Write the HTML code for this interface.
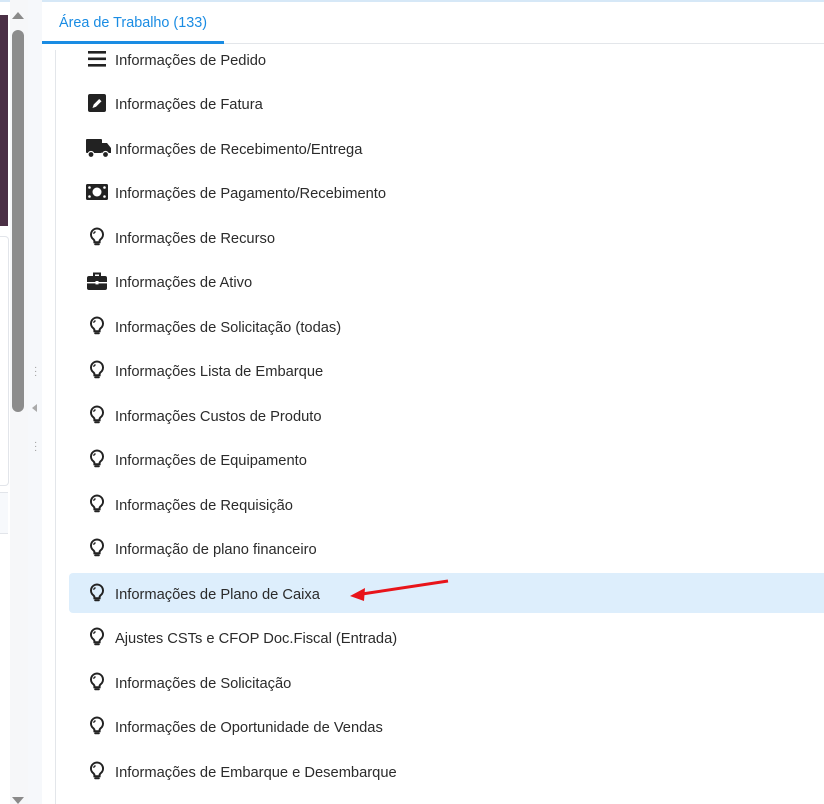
<!DOCTYPE html><html><head><meta charset="utf-8"><style>
body{margin:0;width:824px;height:804px;overflow:hidden;background:#fff;font-family:"Liberation Sans",sans-serif;position:relative}
.a{position:absolute}
.row{position:absolute;left:86px;height:22px;font-size:14.7px;color:#2b2b2b;line-height:22px}
.row svg{position:absolute;left:0;top:0}
.row span{position:absolute;left:29px;top:2px;white-space:nowrap}
</style></head><body>
<div class="a" style="left:0;top:0;width:824px;height:2px;background:#d6e8f7"></div>
<div class="a" style="left:0;top:15px;width:8px;height:211px;background:#4b3045"></div>
<div class="a" style="left:0;top:236px;width:8px;height:248px;border:1px solid #e2e5ea;border-left:none;border-radius:0 4px 4px 0"></div>
<div class="a" style="left:0;top:492px;width:8px;height:40px;border-top:1px solid #e2e5ea;border-bottom:1px solid #e2e5ea;background:#f7f9fc"></div>
<div class="a" style="left:10px;top:0;width:18px;height:804px;background:#f6f7f9"></div>
<div class="a" style="left:12px;top:12px;width:0;height:0;border-left:6px solid transparent;border-right:6px solid transparent;border-bottom:7px solid #8a8a8a"></div>
<div class="a" style="left:12px;top:30px;width:12px;height:382px;background:#8c8c8c;border-radius:6px"></div>
<div class="a" style="left:12px;top:797px;width:0;height:0;border-left:6px solid transparent;border-right:6px solid transparent;border-top:7px solid #8a8a8a"></div>
<div class="a" style="left:28px;top:0;width:14px;height:804px;background:#f6f8fb"></div>
<div class="a" style="left:34px;top:366px;color:#999;font-size:10px;line-height:4px">·<br>·<br>·</div>
<div class="a" style="left:32px;top:404px;width:0;height:0;border-top:4px solid transparent;border-bottom:4px solid transparent;border-right:5px solid #aaa"></div>
<div class="a" style="left:34px;top:441px;color:#999;font-size:10px;line-height:4px">·<br>·<br>·</div>
<div class="a" style="left:42px;top:43px;width:782px;height:1px;background:#e3e6ea"></div>
<div class="a" style="left:42px;top:41px;width:182px;height:3px;background:#1a8ce3"></div>
<div class="a" style="left:59px;top:15px;font-size:14.4px;color:#1a8ce3">Área de Trabalho (133)</div>
<div class="a" style="left:55px;top:50px;width:1px;height:754px;background:#e3e6ea"></div>
<div class="a" style="left:69px;top:573px;width:760px;height:40px;background:#ddeefc;border-radius:4px"></div>
<svg class="a" style="left:0;top:0" width="824" height="804"><defs><symbol id="b" viewBox="0 0 22 22"><path d="M11 2.5a6 6 0 0 0-3.6 10.8c.7.6 1 1.2 1 2v.9h5.2v-.9c0-.8.3-1.4 1-2A6 6 0 0 0 11 2.5z" fill="none" stroke="#222" stroke-width="2"/><path d="M9.6 5.8a2.3 2.3 0 0 0-1.9 2" fill="none" stroke="#222" stroke-width="1.3"/><rect x="8.2" y="17.2" width="5.6" height="2" rx="1" fill="#222"/></symbol></defs>
<path d="M448 581 L362 594" stroke="#e8141a" stroke-width="3" fill="none"/><path d="M350 596 L365 588 L364 601z" fill="#e8141a"/></svg>
<div class="row" style="top:48px"><svg width="22" height="22"><rect x="2" y="3" width="18" height="2.6" fill="#222"/><rect x="2" y="9.5" width="18" height="2.6" fill="#222"/><rect x="2" y="16" width="18" height="2.6" fill="#222"/></svg><span>Informações de Pedido</span></div>
<div class="row" style="top:92px"><svg width="22" height="22"><rect x="2" y="2" width="18" height="18" rx="2" fill="#222"/><path d="M6.5 16l1.2-3.5 5.5-5.5 2.3 2.3-5.5 5.5z" fill="#fff"/></svg><span>Informações de Fatura</span></div>
<div class="row" style="top:137px"><svg width="26" height="22"><rect x="0" y="2" width="16" height="14" rx="1" fill="#222"/><path d="M16 6h5l4 5v5h-9z" fill="#222"/><circle cx="5" cy="17.5" r="3" fill="#222" stroke="#fff" stroke-width="1.2"/><circle cx="19.5" cy="17.5" r="3" fill="#222" stroke="#fff" stroke-width="1.2"/></svg><span>Informações de Recebimento/Entrega</span></div>
<div class="row" style="top:181px"><svg width="24" height="22"><rect x="0" y="3" width="22" height="16" rx="1.5" fill="#222"/><circle cx="11" cy="11" r="4.5" fill="#fff"/><circle cx="3.5" cy="6.5" r="1.3" fill="#fff"/><circle cx="18.5" cy="15.5" r="1.3" fill="#fff"/><circle cx="3.5" cy="15.5" r="1.3" fill="#fff"/><circle cx="18.5" cy="6.5" r="1.3" fill="#fff"/></svg><span>Informações de Pagamento/Recebimento</span></div>
<div class="row" style="top:226px"><svg width="22" height="22"><use href="#b"/></svg><span>Informações de Recurso</span></div>
<div class="row" style="top:270px"><svg width="22" height="22"><path d="M8 6V3.5h6V6" fill="none" stroke="#222" stroke-width="2"/><rect x="1" y="6" width="20" height="14" rx="2" fill="#222"/><rect x="1" y="12" width="20" height="1.4" fill="#fff"/><rect x="9.5" y="11" width="3" height="3.4" fill="#fff"/></svg><span>Informações de Ativo</span></div>
<div class="row" style="top:315px"><svg width="22" height="22"><use href="#b"/></svg><span>Informações de Solicitação (todas)</span></div>
<div class="row" style="top:359px"><svg width="22" height="22"><use href="#b"/></svg><span>Informações Lista de Embarque</span></div>
<div class="row" style="top:404px"><svg width="22" height="22"><use href="#b"/></svg><span>Informações Custos de Produto</span></div>
<div class="row" style="top:448px"><svg width="22" height="22"><use href="#b"/></svg><span>Informações de Equipamento</span></div>
<div class="row" style="top:493px"><svg width="22" height="22"><use href="#b"/></svg><span>Informações de Requisição</span></div>
<div class="row" style="top:537px"><svg width="22" height="22"><use href="#b"/></svg><span>Informação de plano financeiro</span></div>
<div class="row" style="top:582px"><svg width="22" height="22"><use href="#b"/></svg><span>Informações de Plano de Caixa</span></div>
<div class="row" style="top:626px"><svg width="22" height="22"><use href="#b"/></svg><span>Ajustes CSTs e CFOP Doc.Fiscal (Entrada)</span></div>
<div class="row" style="top:671px"><svg width="22" height="22"><use href="#b"/></svg><span>Informações de Solicitação</span></div>
<div class="row" style="top:715px"><svg width="22" height="22"><use href="#b"/></svg><span>Informações de Oportunidade de Vendas</span></div>
<div class="row" style="top:760px"><svg width="22" height="22"><use href="#b"/></svg><span>Informações de Embarque e Desembarque</span></div>
</body></html>
